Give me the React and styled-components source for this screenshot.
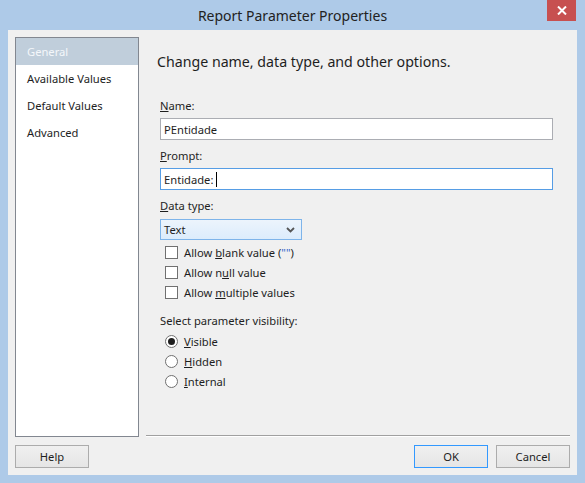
import React from 'react';
import styled, { createGlobalStyle } from 'styled-components';

const GlobalStyle = createGlobalStyle`
  html, body {
    margin: 0;
    padding: 0;
  }
  body {
    font-family: 'Noto Sans', 'Liberation Sans', sans-serif;
    font-size: 11.2px;
    color: #1e1e1e;
  }
`;

const navItems = ['General', 'Available Values', 'Default Values', 'Advanced'];

const Ul = ({ children }) => <u>{children}</u>;

const App = () => {
  return (
    <>
      <GlobalStyle />
      <Window>
        <TitleBar>
          <Title>Report Parameter Properties</Title>
          <CloseButton>
            <svg width="10" height="9" viewBox="0 0 10 9">
              <path d="M1 0.5 L9 8.5 M9 0.5 L1 8.5" stroke="#fff" strokeWidth="2" />
            </svg>
          </CloseButton>
        </TitleBar>
        <Client>
          <Body>
            <Nav>
              {navItems.map((item, i) => (
                <NavItem key={item} $active={i === 0}>
                  {item}
                </NavItem>
              ))}
            </Nav>
            <Main>
              <Content>
                <Heading>Change name, data type, and other options.</Heading>
                <Form>
                  <Label $top={1}>
                    <Ul>N</Ul>ame:
                  </Label>
                  <Field>PEntidade</Field>
                  <Label $top={8}>
                    <Ul>P</Ul>rompt:
                  </Label>
                  <Field $focused>
                    Entidade:&nbsp;<Caret />
                  </Field>
                  <Label $top={8}>
                    <Ul>D</Ul>ata type:
                  </Label>
                  <Select>
                    <span>Text</span>
                    <svg width="9" height="6" viewBox="0 0 9 6">
                      <path d="M1 1 L4.5 4.5 L8 1" stroke="#555" strokeWidth="1.8" fill="none" />
                    </svg>
                  </Select>
                  <OptionList $top={2}>
                    <OptionRow>
                      <CheckBox />
                      <span>
                        Allow <Ul>b</Ul>lank value (<Quote>""</Quote>)
                      </span>
                    </OptionRow>
                    <OptionRow>
                      <CheckBox />
                      <span>
                        Allow n<Ul>u</Ul>ll value
                      </span>
                    </OptionRow>
                    <OptionRow>
                      <CheckBox />
                      <span>
                        Allow <Ul>m</Ul>ultiple values
                      </span>
                    </OptionRow>
                  </OptionList>
                  <Label $top={11}>Select parameter visibility:</Label>
                  <OptionList $top={-2}>
                    <OptionRow>
                      <Radio $checked />
                      <span>
                        <Ul>V</Ul>isible
                      </span>
                    </OptionRow>
                    <OptionRow>
                      <Radio />
                      <span>
                        <Ul>H</Ul>idden
                      </span>
                    </OptionRow>
                    <OptionRow>
                      <Radio />
                      <span>
                        <Ul>I</Ul>nternal
                      </span>
                    </OptionRow>
                  </OptionList>
                </Form>
              </Content>
              <Separator />
            </Main>
          </Body>
          <ButtonRow>
            <Button>Help</Button>
            <Spacer />
            <Button $default>OK</Button>
            <Button>Cancel</Button>
          </ButtonRow>
        </Client>
      </Window>
    </>
  );
};

export default App;

const Window = styled.div`
  width: 585px;
  height: 483px;
  box-sizing: border-box;
  background: #aecae8;
  display: flex;
  flex-direction: column;
`;

const TitleBar = styled.div`
  height: 30px;
  flex-shrink: 0;
  position: relative;
  display: flex;
  align-items: center;
  justify-content: center;
`;

const Title = styled.div`
  font-size: 14px;
  color: #222;
  padding-top: 1px;
`;

const CloseButton = styled.div`
  position: absolute;
  top: 0;
  right: 9px;
  width: 29px;
  height: 21px;
  background: #c75050;
  display: flex;
  align-items: center;
  justify-content: center;
`;

const Client = styled.div`
  flex: 1;
  margin: 0 8px 8px 8px;
  background: #f0f0f0;
  padding: 7px 7px 7px 7px;
  display: flex;
  flex-direction: column;
`;

const Body = styled.div`
  height: 400px;
  display: flex;
`;

const Nav = styled.div`
  width: 124px;
  box-sizing: border-box;
  border: 1px solid #828790;
  background: #fff;
  display: flex;
  flex-direction: column;
`;

const NavItem = styled.div`
  height: 27px;
  line-height: 27px;
  padding-left: 11px;
  background: ${(p) => (p.$active ? '#c0cedb' : 'transparent')};
  color: ${(p) => (p.$active ? '#f4f7fa' : '#1e1e1e')};
`;

const Main = styled.div`
  flex: 1;
  margin-left: 7px;
  display: flex;
  flex-direction: column;
`;

const Content = styled.div`
  flex: 1;
  padding: 15px 17px 0 11px;
`;

const Heading = styled.div`
  font-size: 14.2px;
  line-height: 20px;
  color: #1e1e1e;
`;

const Form = styled.div`
  margin-top: 25px;
  padding-left: 3px;
  display: flex;
  flex-direction: column;
`;

const Label = styled.div`
  line-height: 16px;
  margin-top: ${(p) => p.$top || 0}px;
  margin-bottom: 4px;
`;

const Field = styled.div`
  height: 22px;
  box-sizing: border-box;
  border: 1px solid ${(p) => (p.$focused ? '#569de5' : '#abadb3')};
  background: #fff;
  display: flex;
  align-items: center;
  padding-left: 3px;
`;

const Caret = styled.span`
  display: inline-block;
  width: 1px;
  height: 15px;
  background: #000;
`;

const Select = styled.div`
  width: 142px;
  height: 21px;
  margin-top: 1px;
  box-sizing: border-box;
  border: 1px solid #7eb4ea;
  background: linear-gradient(#ecf4fc, #dcecfc);
  display: flex;
  align-items: center;
  justify-content: space-between;
  padding: 0 6px 0 3px;
`;

const OptionList = styled.div`
  margin-top: ${(p) => p.$top || 0}px;
  display: flex;
  flex-direction: column;
`;

const OptionRow = styled.div`
  height: 20px;
  display: flex;
  align-items: center;
  padding-left: 5px;
  gap: 6px;
`;

const Quote = styled.span`
  color: #3366cc;
`;

const CheckBox = styled.span`
  width: 13px;
  height: 13px;
  box-sizing: border-box;
  border: 1px solid #707070;
  background: #fff;
  flex-shrink: 0;
`;

const Radio = styled.span`
  width: 13px;
  height: 13px;
  box-sizing: border-box;
  border: 1px solid #707070;
  border-radius: 50%;
  background: #fff;
  flex-shrink: 0;
  display: flex;
  align-items: center;
  justify-content: center;
  &::after {
    content: '';
    display: ${(p) => (p.$checked ? 'block' : 'none')};
    width: 7px;
    height: 7px;
    border-radius: 50%;
    background: #1e1e1e;
  }
`;

const Separator = styled.div`
  height: 1px;
  background: #a0a0a0;
  border-bottom: 1px solid #fff;
`;

const ButtonRow = styled.div`
  margin-top: 8px;
  display: flex;
  gap: 8px;
`;

const Spacer = styled.div`
  flex: 1;
`;

const Button = styled.div`
  width: 74px;
  height: 23px;
  box-sizing: border-box;
  border: 1px solid ${(p) => (p.$default ? '#3399ff' : '#acacac')};
  background: linear-gradient(#f0f0f0, #e5e5e5);
  display: flex;
  align-items: center;
  justify-content: center;
  color: #1e1e1e;
`;
